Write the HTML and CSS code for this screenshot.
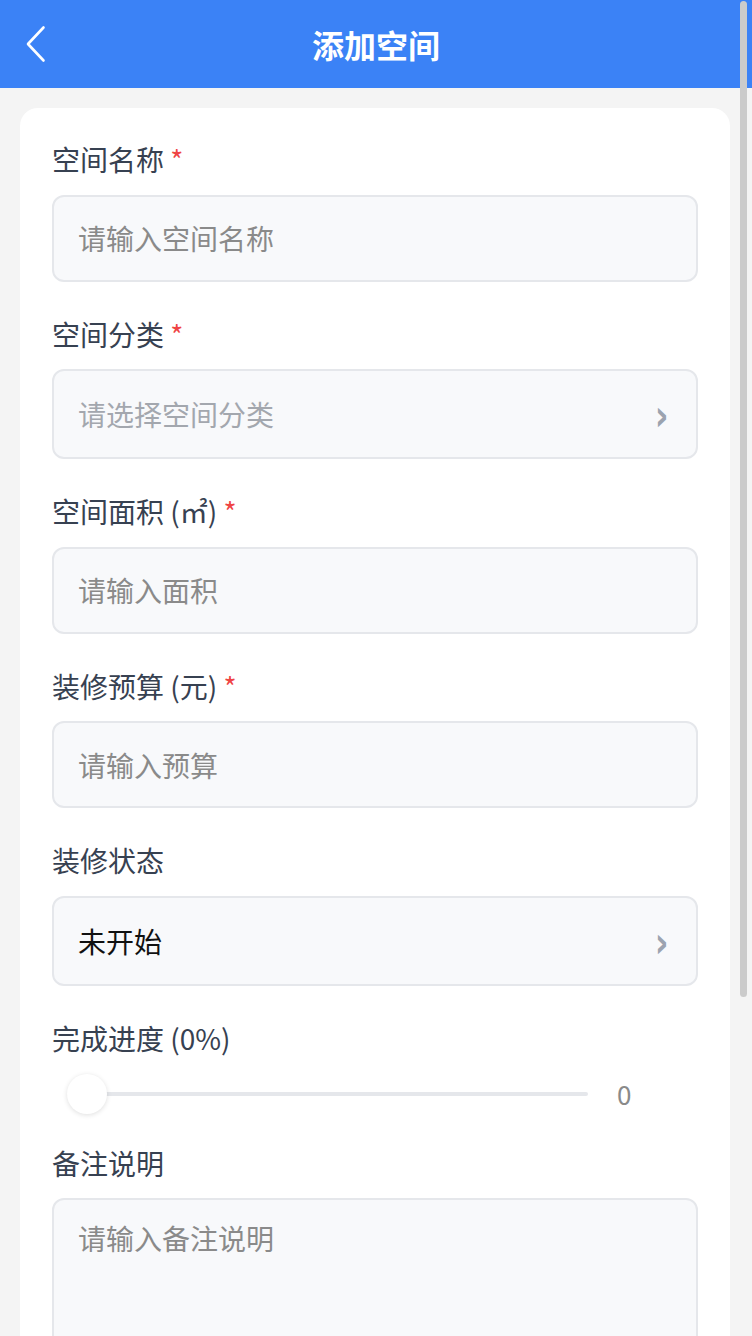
FILE: index.html
```html
<!DOCTYPE html>
<html lang="zh-CN">
<head>
<meta charset="utf-8">
<title>添加空间</title>
<link rel="stylesheet" href="styles.css">
</head>
<body>
<div class="page">
  <header class="nav">
    <span class="back">
      <svg width="24" height="40" viewBox="0 0 24 40"><path d="M18.5 3.5 L3 20 L18.5 36.5" fill="none" stroke="#fff" stroke-width="2.6" stroke-linecap="round" stroke-linejoin="round"/></svg>
    </span>
    <h1 class="title">添加空间</h1>
  </header>

  <main class="card">
    <div class="field">
      <div class="label">空间名称 <span class="req">*</span></div>
      <div class="box input"><span class="ph">请输入空间名称</span></div>
    </div>
    <div class="field">
      <div class="label">空间分类 <span class="req">*</span></div>
      <div class="box select"><span class="ph light">请选择空间分类</span><span class="arrow">›</span></div>
    </div>
    <div class="field">
      <div class="label">空间面积 (㎡) <span class="req">*</span></div>
      <div class="box input"><span class="ph">请输入面积</span></div>
    </div>
    <div class="field">
      <div class="label">装修预算 (元) <span class="req">*</span></div>
      <div class="box input"><span class="ph">请输入预算</span></div>
    </div>
    <div class="field">
      <div class="label">装修状态</div>
      <div class="box select"><span class="val">未开始</span><span class="arrow">›</span></div>
    </div>
    <div class="field slider-field">
      <div class="label">完成进度 (0%)</div>
      <div class="slider-row">
        <div class="track"><span class="thumb"></span></div>
        <span class="slider-val">0</span>
      </div>
    </div>
    <div class="field">
      <div class="label">备注说明</div>
      <div class="box textarea"><span class="ph">请输入备注说明</span></div>
    </div>
  </main>
</div>
<div class="scroll-thumb"></div>
</body>
</html>
```

FILE: styles.css
```css
html, body {
  margin: 0;
  padding: 0;
  height: 1336px;
  overflow: hidden;
  background: #f4f4f4;
}
body {
  font-family: "Noto Sans CJK SC", "Noto Sans", sans-serif;
}
.page {
  display: flex;
  flex-direction: column;
}
.nav {
  height: 88px;
  background: #3b82f6;
  display: flex;
  align-items: center;
  justify-content: center;
  position: relative;
}
.back {
  position: absolute;
  left: 25px;
  top: 24px;
  width: 24px;
  height: 40px;
  display: block;
}
.back svg { display: block; }
.title {
  margin: 0;
  color: #fff;
  font-size: 32px;
  font-weight: 700;
  line-height: 40px;
}
.card {
  margin: 20px 22px 0 20px;
  background: #fff;
  border-radius: 18px;
  padding: 31px 32px 40px;
  display: flex;
  flex-direction: column;
  gap: 32px;
}
.label {
  font-size: 28px;
  line-height: 40px;
  color: #374151;
  margin-bottom: 15.5px;
}
.req { color: #ef4444; }
.box {
  box-sizing: border-box;
  background: #f8f9fb;
  border: 2px solid #e5e7eb;
  border-radius: 12px;
  padding: 0 24px;
  display: flex;
  align-items: center;
  font-size: 28px;
}
.input { height: 87px; }
.select { height: 90px; justify-content: space-between; }
.textarea { height: 200px; align-items: flex-start; padding-top: 18px; }
.ph { color: #8a8a8a; }
.ph.light { color: #a3a7ae; }
.val { color: #111; }
.arrow {
  color: #9ca3af;
  font-size: 42px;
  line-height: 1;
  padding-top: 4px;
  margin-right: 2px;
  font-family: "DejaVu Sans", sans-serif;
  font-weight: 700;
  transform: scaleX(0.8);
}
.slider-field { margin-bottom: -3px; }
.slider-field .label { margin-bottom: 16px; }
.slider-row {
  display: flex;
  align-items: center;
  height: 40px;
  padding-left: 15px;
}
.track {
  flex: 1;
  height: 4px;
  background: #e5e7eb;
  border-radius: 2px;
  position: relative;
}
.thumb {
  position: absolute;
  left: 0;
  top: -18px;
  width: 40px;
  height: 40px;
  border-radius: 50%;
  background: #fff;
  box-shadow: 0 1px 5px rgba(0,0,0,0.13);
}
.slider-val {
  width: 81px;
  margin-left: 29px;
  font-size: 26px;
  color: #8a8a8a;
}
.scroll-thumb {
  position: fixed;
  top: 1px;
  right: 5px;
  width: 7px;
  height: 996px;
  background: #cbcbcb;
  border-radius: 4px;
}
```
